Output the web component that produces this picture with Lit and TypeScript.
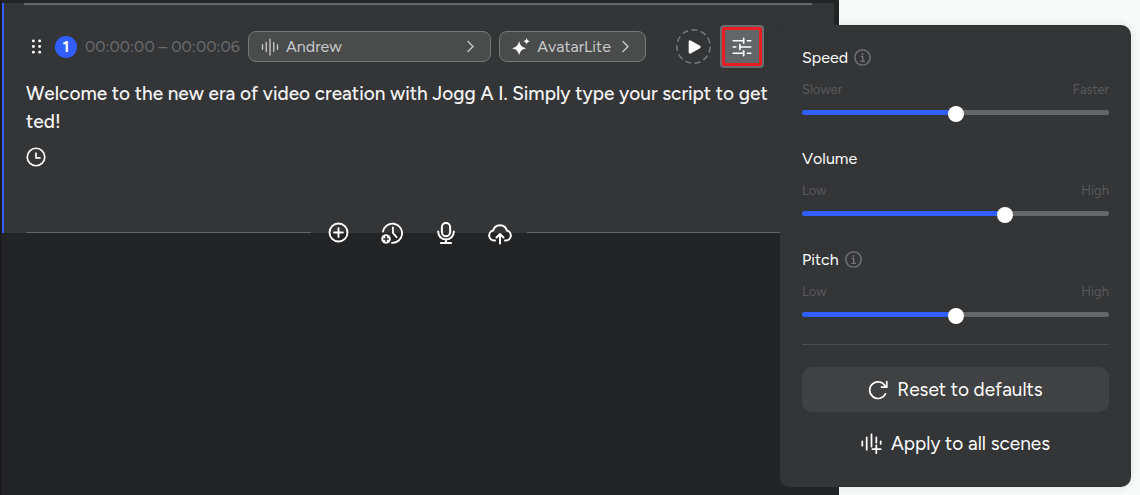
import { LitElement, html, css, svg } from "lit";
import { customElement, property, state } from "lit/decorators.js";

const icon = (size: number, body: unknown, stroke = 1.8) => html`<svg
  width=${size} height=${size} viewBox="0 0 24 24" fill="none" stroke="currentColor"
  stroke-width=${stroke} stroke-linecap="round" stroke-linejoin="round" aria-hidden="true">${body}</svg>`;

const grip = svg`<g fill="currentColor" stroke="none"><circle cx="7" cy="3" r="2.300"/><circle cx="17" cy="3" r="2.300"/><circle cx="7" cy="12" r="2.300"/><circle cx="17" cy="12" r="2.300"/><circle cx="7" cy="21" r="2.300"/><circle cx="17" cy="21" r="2.300"/></g>`;
const wave = svg`<path d="M2 9v6M7 6v12M12 1.500v21M17 6v12M22 9v6"/>`;
const chevron = svg`<path d="M8 4l8 8-8 8"/>`;
const sparkle = svg`<path fill="currentColor" stroke="none" d="M9.500 4c1.600 6.200 3.200 7.900 9.500 9.500-6.300 1.600-7.900 3.300-9.500 9.500-1.600-6.200-3.200-7.900-9.500-9.500 6.300-1.600 7.900-3.300 9.500-9.500zM19.500 0c.8 2.800 1.600 3.600 4.500 4.400-2.900.8-3.700 1.600-4.500 4.400-.8-2.800-1.600-3.600-4.500-4.400 2.900-.8 3.700-1.600 4.500-4.400z"/>`;
const play = svg`<path fill="currentColor" d="M6 4v16l14-8z" stroke-width="4"/>`;
const tune = svg`<path d="M1.500 4.500h12M18.500 4.500h4M14 1.500v6M1.500 12h3M9.500 12h13M9.500 9v6M1.500 19.500h12M18.500 19.500h4M14 16.500v6"/>`;
const clock = svg`<circle cx="12" cy="12" r="10.500"/><path d="M12 6.500V13h5.500" stroke-linecap="butt" stroke-linejoin="miter"/>`;
const plus = svg`<circle cx="12" cy="12" r="10.300"/><path d="M12 7v10M7 12h10"/>`;
const clockPlus = svg`<path d="M2.200 10.500A10.500 10.500 0 1 1 12 22.800M13 6v6l4 4.500"/><circle cx="5.500" cy="18.500" r="5.200" fill="currentColor" stroke="none"/><path d="M5.500 16v5M3 18.500h5" stroke="#2a2b2d" stroke-width="1.800"/>`;
const mic = svg`<rect x="7.500" y="1" width="9" height="14.500" rx="4.500"/><path d="M3.500 10.500c0 5 3.500 8.500 8.500 8.500s8.500-3.500 8.500-8.500M12 19v4M6.500 23h11"/>`;
const upload = svg`<path d="M7 19.500H6A5 5 0 0 1 5.200 9.600 7 7 0 0 1 18.800 9.600 5 5 0 0 1 18 19.500h-1M12 22.500v-9M8.500 16.500l3.500-3.500 3.500 3.500"/>`;
const info = svg`<circle cx="12" cy="12" r="10.800"/><path d="M9.500 10.500H12.300V17.500M9 17.500h6.500" stroke-linecap="butt"/><circle cx="12" cy="7" r="1.300" fill="currentColor" stroke="none"/>`;
const reset = svg`<path d="M21 16.500A10 10 0 1 1 20.800 7.500M22.500 2v6.500H16" stroke-linejoin="miter"/>`;
const waveAdd = svg`<path d="M1.500 9.500v5M6.500 5v14M12 1.500v14M17.500 5v6M22.500 9.500v3M17.500 14v9M13 18.500h9.500"/>`;

@customElement("voice-slider")
class VoiceSlider extends LitElement {
  @property() label = "";
  @property() low = "";
  @property() high = "";
  @property({ type: Boolean }) hint = false;
  @property({ type: Number }) value = 50;

  static styles = css`
    :host { display: block; }
    .head { display: flex; align-items: center; gap: 6px; height: 20px; font-size: 16px; color: #fff; }
    .hint { display: flex; color: #737477; }
    .ends { display: flex; justify-content: space-between; margin-top: 14px; font-size: 13px; line-height: 18px; color: #58595b; }
    .range { appearance: none; display: block; width: 100%; height: 16px; margin: 5px 0 0; background: transparent; }
    .range::-webkit-slider-runnable-track {
      height: 5px; border-radius: 3px;
      background: linear-gradient(to right, #315eff var(--fill), #656668 var(--fill));
    }
    .range::-webkit-slider-thumb {
      appearance: none; width: 16px; height: 16px; margin-top: -4px; border-radius: 50%; background: #fff;
    }
  `;

  render() {
    return html`
      <div class="head"><label for="range">${this.label}</label>${this.hint ? html`<span class="hint">${icon(17, info, 2)}</span>` : ""}</div>
      <div class="ends"><span>${this.low}</span><span>${this.high}</span></div>
      <input id="range" class="range" type="range" min="0" max="100" .value=${String(this.value)}
        style="--fill: ${this.value}%"
        @input=${(e: Event) => { this.value = Number((e.target as HTMLInputElement).value); }} />
    `;
  }
}

@customElement("app-root")
class AppRoot extends LitElement {
  @state() open = true;

  static styles = css`
    * { box-sizing: border-box; }
    :host {
      display: block; position: relative; min-height: 100vh; overflow: hidden;
      background: #f8faf9; color: #fff; font-kerning: none;
      font-family: Figtree, Lato, "Open Sans", sans-serif; font-size: 16px;
    }
    button { font: inherit; font-kerning: inherit; color: inherit; border: 0; padding: 0; background: none; display: flex; align-items: center; cursor: pointer; }
    .editor { min-height: 100vh; margin-right: 301px; padding: 3px 5px 0 2px; background: #232426; box-shadow: inset 2px 0 #1b1b1d; }
    .scene { display: flow-root; border-left: 2px solid #315eff; padding: 0 22px; background: #343537; }
    .rule { height: 2px; margin: 0 0 20px -2px; background: #666769; }
    .row { display: flex; align-items: center; gap: 8px; height: 43px; }
    .grip { width: 21px; justify-content: center; }
    .badge { display: grid; place-items: center; width: 22px; height: 22px; border-radius: 50%; background: #315eff; font-weight: 700; }
    .time { width: 155px; color: #6b6c6f; white-space: nowrap; }
    .pill { height: 31px; border: 1px solid #77787a; border-radius: 8px; background: #4a4b4b; color: #c8c9ca; padding: 0 12px; gap: 7px; }
    .voice { width: 243px; }
    .voice .name { flex: 1; text-align: left; }
    .avatar { width: 147px; justify-content: space-between; }
    .bright { display: flex; color: #fff; }
    .play { width: 35px; height: 35px; justify-content: center; position: relative; margin-left: 22px; }
    .ring { position: absolute; inset: 0; color: #77787a; }
    .tune { width: 44px; height: 43px; margin-left: 1px; justify-content: center; border: 2px solid #6a6d6f; border-radius: 4px; background: #626669; box-shadow: inset 0 0 0 3px #ed1c24; }
    .script { margin: 12px 0 11px; font-size: 19px; font-weight: 500; line-height: 28px; color: #f4f4f4; white-space: nowrap; }
    .tools { display: flex; align-items: center; gap: 15px; height: 23px; margin: 54px 0 -11px; position: relative; }
    .line { flex: 1; height: 1px; background: #666769; }
    .group { display: flex; gap: 30px; }
    .tool { width: 24px; height: 24px; justify-content: center; }
    .panel {
      position: absolute; top: 25px; right: 9px; width: 351px; padding: 22px 22px 21px;
      border-radius: 10px; background: #343537; box-shadow: 0 0 10px rgba(52, 53, 55, 0.12);
    }
    .sliders { display: grid; gap: 28px; }
    .sep { border: 0; height: 1px; margin: 22px 0; background: #4b4c4e; }
    .action { width: 100%; height: 45px; justify-content: center; gap: 9px; border-radius: 10px; font-size: 19px; }
    .fill { background: #404142; margin-bottom: 9px; }
  `;

  render() {
    return html`
      <main class="editor">
        <section class="scene">
          <div class="rule"></div>
          <div class="row">
            <button class="grip" aria-label="Move scene">${icon(15, grip)}</button>
            <span class="badge">1</span>
            <span class="time">00:00:00 – 00:00:06</span>
            <button class="pill voice">${icon(18, wave)}<span class="name">Andrew</span>${icon(15, chevron, 2.2)}</button>
            <button class="pill avatar"><span class="bright">${icon(18, sparkle)}</span><span>AvatarLite</span>${icon(15, chevron, 2.2)}</button>
            <button class="play" aria-label="Play">
              <svg class="ring" viewBox="0 0 35 35" fill="none" stroke="currentColor" stroke-width="1.500" stroke-dasharray="6 3.500"><circle cx="17.500" cy="17.500" r="16.700"/></svg>
              ${icon(16, play)}
            </button>
            <button class="tune" aria-label="Voice settings" @click=${() => { this.open = !this.open; }}>${icon(20, tune, 2)}</button>
          </div>
          <p class="script">Welcome to the new era of video creation with Jogg A I. Simply type your script to get<br />ted!</p>
          <button aria-label="Add pause">${icon(20, clock, 2)}</button>
          <div class="tools">
            <span class="line"></span>
            <div class="group">
              <button class="tool" aria-label="Add scene">${icon(21, plus, 2.2)}</button>
              <button class="tool" aria-label="Add timing">${icon(22, clockPlus, 2)}</button>
              <button class="tool" aria-label="Record">${icon(22, mic, 2.2)}</button>
              <button class="tool" aria-label="Upload">${icon(24, upload, 2)}</button>
            </div>
            <span class="line"></span>
          </div>
        </section>
      </main>
      ${this.open ? html`
        <aside class="panel">
          <div class="sliders">
            <voice-slider label="Speed" low="Slower" high="Faster" hint .value=${50}></voice-slider>
            <voice-slider label="Volume" low="Low" high="High" .value=${67}></voice-slider>
            <voice-slider label="Pitch" low="Low" high="High" hint .value=${50}></voice-slider>
          </div>
          <hr class="sep" />
          <button class="action fill">${icon(20, reset, 2)}Reset to defaults</button>
          <button class="action">${icon(21, waveAdd, 2)}Apply to all scenes</button>
        </aside>` : ""}
    `;
  }
}
